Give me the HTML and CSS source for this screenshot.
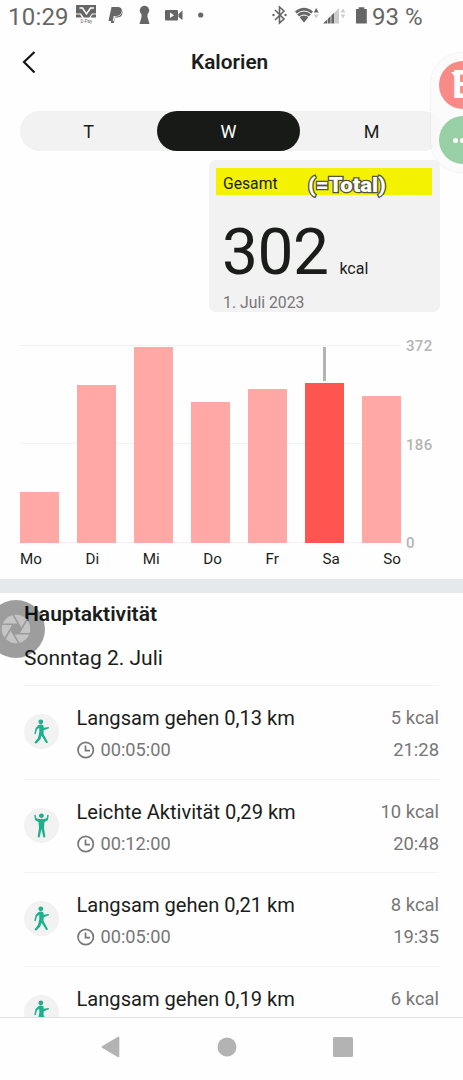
FILE: index.html
```html
<!DOCTYPE html>
<html lang="de">
<head>
  <meta charset="UTF-8">
  <title>Kalorien</title>
  <link rel="stylesheet" href="styles.css">
</head>
<body>
  <!-- icons used more than once -->
  <svg class="defs" width="0" height="0">
    <symbol id="walk" viewBox="0 0 35 35">
      <circle cx="16.8" cy="7.8" r="2.4"/>
      <path d="M14.500 11 Q17 9.800 19.300 11.200 L19.800 13.800 L24.700 12.900 L25 14.200 L19.700 16.200 L19.500 20 L24 28.200 L22.300 29.200 L17.600 21.800 L16.300 25.400 L12 29.700 L10.400 28.500 L14 24 L15.300 18 L15.200 13.800 L12.900 15.500 L11.700 20.300 L10.300 19.800 L11.600 14 Z"/>
    </symbol>
    <symbol id="stand" viewBox="0 0 35 35">
      <circle cx="17.4" cy="7.8" r="2.4"/>
      <path d="M10.300 7 L11.600 6.800 L12.300 10.300 L15.500 11 H19.400 L22.700 10.300 L23.300 6.800 L24.700 7 L24 12 L20.500 14 L20 20 L21.400 29 L19.400 29.400 L17.500 21 L15.600 29.400 L13.600 29 L15 20 L14.500 14 L11 12 Z"/>
    </symbol>
    <symbol id="clock" viewBox="0 0 18 18">
      <circle cx="8.700" cy="9" r="7.700"/>
      <path d="M8.500 4.500 V9.600 H13"/>
    </symbol>
  </svg>

  <div class="screen">
    <div class="status">
      <span class="time">10:29</span>
      <svg class="status-left" width="130" height="30" viewBox="76 0 130 30">
        <path d="M76 5h20v8.500h-4l-2.800 4h-5.400l-2.800-4h-5z"/>
        <path d="M76 14.500h4l2 3H76z M92.500 14.500H96v3h-5.500z"/>
        <path class="cut" d="M79.500 8h3l4 6 4-6H94"/>
        <text x="80.500" y="22.500">D-Pay</text>
        <path d="M111.500 7h7q4 .5 3.200 4.500-1 4.500-6 4.500h-2l-1 5h-4.200z"/>
        <path d="M122.500 10.500q.8 6.500-5.500 7h-2l-1.200 5.500h-3l.5-2h2.500l1.200-4.500h2q4.500-.5 5.500-6z"/>
        <circle cx="144.500" cy="10.500" r="4.700"/>
        <path d="M141.500 12h6v5l2 7h-10l2-7z"/>
        <rect x="165" y="10" width="13" height="10.500" rx="1"/>
        <path d="M178.500 14l4-3.500v9.500l-4-3z"/>
        <path class="white" d="M170 12.500l4 2.700-4 2.700z"/>
        <circle cx="200.700" cy="15" r="2.600"/>
      </svg>
      <svg class="status-right" width="96" height="30" viewBox="272 0 96 30">
        <path class="line" d="M275 10l9 9-4.500 4V7l4.500 4-9 9"/>
        <circle cx="273.500" cy="15" r="1.200"/>
        <circle cx="285.500" cy="15" r="1.200"/>
        <path d="M295 11.500q9-7.500 18 0L304 22.500z"/>
        <path class="wave" d="M296.500 14q7.500-6 15 0M299 17q5-4 10 0"/>
        <path d="M313.700 12.500l2.500-4.500 2.500 4.500z"/>
        <path class="pale" d="M313.700 14.500l2.500 4 2.500-4z"/>
        <path d="M323 23.500l4-3.800v3.800z M327.600 19l3-3v7.500h-3z M331.300 15.500l3-3v11h-3z"/>
        <path class="pale" d="M335 12l4-4v15.500h-4z M340.700 12.500l2.300-4 2.300 4z M340.700 14.500l2.300 4 2.300-4z"/>
        <path d="M356 9h2.700V7.200h5.600V9h2.500v14.500H356z"/>
      </svg>
      <span class="battery">93 %</span>
    </div>

    <div class="header">
      <svg class="back" width="16" height="24" viewBox="0 0 16 24"><path d="M13.500 2L3 12 13.500 22.500"/></svg>
      <h1>Kalorien</h1>
    </div>

    <div class="tabs">
      <div class="tab">T</div>
      <div class="tab active">W</div>
      <div class="tab">M</div>
    </div>

    <div class="card">
      <div class="mark">Gesamt <span class="note">(=Total)</span></div>
      <div class="value"><span class="amount">302</span><span class="unit">kcal</span></div>
      <div class="date">1. Juli 2023</div>
    </div>

    <div class="chart">
      <div class="plot">
        <div class="bar" style="height: 51px"></div>
        <div class="bar" style="height: 158px"></div>
        <div class="bar" style="height: 196px"></div>
        <div class="bar" style="height: 141px"></div>
        <div class="bar" style="height: 154.500px"></div>
        <div class="bar selected" style="height: 160px"></div>
        <div class="bar" style="height: 147.500px"></div>
      </div>
      <div class="scale"><span>372</span><span>186</span><span>0</span></div>
    </div>
    <div class="days">
      <span>Mo</span><span>Di</span><span>Mi</span><span>Do</span><span>Fr</span><span>Sa</span><span>So</span>
    </div>

    <div class="band"></div>

    <div class="activity">
      <h2>Hauptaktivität</h2>
      <h3>Sonntag 2. Juli</h3>
      <div class="row">
        <svg class="icon"><use href="#walk"/></svg>
        <div class="info">
          <div class="name">Langsam gehen 0,13 km</div>
          <div class="duration"><svg class="clock"><use href="#clock"/></svg>00:05:00</div>
        </div>
        <div class="numbers"><div>5 kcal</div><div>21:28</div></div>
      </div>
      <div class="row">
        <svg class="icon"><use href="#stand"/></svg>
        <div class="info">
          <div class="name">Leichte Aktivität 0,29 km</div>
          <div class="duration"><svg class="clock"><use href="#clock"/></svg>00:12:00</div>
        </div>
        <div class="numbers"><div>10 kcal</div><div>20:48</div></div>
      </div>
      <div class="row">
        <svg class="icon"><use href="#walk"/></svg>
        <div class="info">
          <div class="name">Langsam gehen 0,21 km</div>
          <div class="duration"><svg class="clock"><use href="#clock"/></svg>00:05:00</div>
        </div>
        <div class="numbers"><div>8 kcal</div><div>19:35</div></div>
      </div>
      <div class="row">
        <svg class="icon"><use href="#walk"/></svg>
        <div class="info">
          <div class="name">Langsam gehen 0,19 km</div>
        </div>
        <div class="numbers"><div>6 kcal</div></div>
      </div>
    </div>

    <div class="navbar">
      <svg width="20" height="22" viewBox="0 0 20 22"><path d="M2 10.300L18 .8q1.300-.3 1.300.7v19q0 1-1.300.7L2 11.700q-1-.7 0-1.400z"/></svg>
      <svg width="20" height="20" viewBox="0 0 20 20"><circle cx="10" cy="10" r="9.500"/></svg>
      <svg width="20" height="20" viewBox="0 0 20 20"><rect width="20" height="20" rx="1.500"/></svg>
    </div>

    <!-- floating buttons -->
    <div class="bubble">
      <div class="dot red">B</div>
      <div class="dot green"><i></i><i></i><i></i></div>
    </div>
    <svg class="shutter" width="58" height="58" viewBox="0 0 58 58">
      <circle class="shade" cx="29" cy="29" r="29"/>
      <circle class="lens" cx="29" cy="29" r="14.300"/>
      <path class="hole" d="M26.300 24.300h5.400l2.700 4.700-2.700 4.700h-5.400L23.600 29z"/>
      <path class="blades" d="M31.700 24.300H14.700M34.400 29L25.900 14.300M31.700 33.700L40.200 19M26.300 33.700H43.300M23.600 29L32.100 43.700M26.300 24.300L17.800 39"/>
    </svg>
  </div>
</body>
</html>
```
FILE: styles.css
```css
* {
  box-sizing: border-box;
}

body {
  margin: 0;
  background: #fefefe;
  font-family: Roboto, sans-serif;
  color: #1b1d1b;
}

h1, h2, h3 {
  margin: 0;
}

.defs {
  display: block;
}

.screen {
  position: relative;
  width: 463px;
  height: 1080px;
  overflow: hidden;
  display: flex;
  flex-direction: column;
}

/* status bar */
.status {
  height: 32px;
  display: flex;
  flex: none;
  padding-left: 8px;
  color: #666;
  font-size: 24px;
  line-height: 34px;
}

.status svg {
  fill: #666;
  flex: none;
}

.time {
  width: 68px;
  letter-spacing: 0.2px;
}

.status-right {
  margin-left: 66px;
}

.status text {
  font-size: 4.5px;
}

.status .cut {
  fill: none;
  stroke: #fefefe;
  stroke-width: 1.5;
}

.status .white {
  fill: #fefefe;
}

.status .line {
  fill: none;
  stroke: #666;
  stroke-width: 1.6;
}

.status .wave {
  fill: none;
  stroke: #fefefe;
  stroke-width: 1;
}

.status .pale {
  fill: #ccc;
}

.battery {
  margin-left: 4px;
  white-space: nowrap;
}

/* title */
.header {
  height: 79px;
  flex: none;
  display: flex;
  padding: 18px 0 0 21px;
}

.back {
  fill: none;
  stroke: #161616;
  stroke-width: 2.2;
}

h1 {
  margin-left: 154px;
  font-size: 20.8px;
  font-weight: 600;
  line-height: 25px;
}

.tabs {
  display: flex;
  flex: none;
  height: 40px;
  margin: 0 20px;
  border-radius: 20px;
  background: #f2f2f2;
}

.tab {
  width: 137px;
  font-size: 18px;
  line-height: 41px;
  text-align: center;
}

.tab.active {
  width: 143px;
  border-radius: 20px;
  background: #181a17;
  color: #fff;
}

.tab:last-child {
  width: 143px;
}

/* total */
.card {
  flex: none;
  width: 231px;
  height: 152px;
  margin: 9px 0 0 209px;
  padding: 8px 8px 0 7px;
  border-radius: 7px;
  background: #f2f2f2;
}

.mark {
  display: flex;
  height: 27px;
  padding-left: 7px;
  background: #f4f200;
  font-size: 15.7px;
  line-height: 32px;
}

.note {
  margin-left: 30px;
  height: 34px;
  font-size: 20px;
  font-weight: 900;
  line-height: 35px;
  color: #fff;
  -webkit-text-stroke: 2.5px #55553a;
  paint-order: stroke fill;
  transform: scaleX(1.1);
  transform-origin: left;
}

.value {
  display: flex;
  align-items: baseline;
  height: 88px;
  padding: 20px 0 0 6px;
}

.amount {
  font-size: 64px;
  line-height: 75px;
  letter-spacing: -0.5px;
}

.unit {
  margin-left: 11px;
  font-size: 16px;
  line-height: 20px;
}

.date {
  padding-left: 7px;
  font-size: 15.8px;
  line-height: 39px;
  height: 24px;
  color: #777;
}

/* chart */
.chart {
  display: flex;
  flex: none;
  margin: 33px 0 0 20px;
}

.plot {
  width: 381px;
  height: 198px;
  display: flex;
  justify-content: space-between;
  align-items: flex-end;
  background: linear-gradient(#f1f1f1, #f1f1f1) 0 0 / 100% 1px no-repeat,
    linear-gradient(#f1f1f1, #f1f1f1) 0 98px / 100% 1px no-repeat,
    linear-gradient(#f1f1f1, #f1f1f1) 0 100% / 100% 1px no-repeat;
}

.bar {
  width: 38.5px;
  background: #ffa8a5;
}

.bar.selected {
  position: relative;
  background: #ff5550;
}

/* marker above the selected day */
.bar.selected::before {
  content: "";
  position: absolute;
  left: 18px;
  top: -36px;
  width: 3px;
  height: 34px;
  background: #b3b3b3;
}

.scale {
  display: flex;
  flex-direction: column;
  justify-content: space-between;
  height: 216px;
  margin: -8px 0 -10px 5px;
  font-size: 15px;
  font-weight: 500;
  line-height: 19px;
  letter-spacing: 0.3px;
  color: #b5b5b5;
}

.days {
  display: flex;
  justify-content: space-between;
  flex: none;
  width: 381px;
  height: 36px;
  margin-left: 20px;
  font-size: 15.2px;
  line-height: 32px;
}

.band {
  flex: none;
  height: 14px;
  background: #e5e9ec;
}

/* activities */
.activity {
  height: 424px;
  overflow: hidden;
  flex: none;
  padding: 0 24px;
}

h2 {
  font-size: 21px;
  font-weight: 600;
  line-height: 42px;
}

h3 {
  height: 50px;
  font-size: 21px;
  font-weight: 400;
  line-height: 46px;
}

.row {
  display: flex;
  height: 93.5px;
  border-top: 1px solid #f3f3f3;
  padding-top: 16px;
}

.icon {
  width: 35px;
  height: 35px;
  margin-top: 12px;
  border-radius: 50%;
  background: #f2f2f2;
  fill: #1cb08d;
}

.info {
  margin-left: 17.5px;
  flex: 1;
  line-height: 32px;
}

.name {
  font-size: 20.1px;
}

.duration {
  display: flex;
  align-items: center;
  font-size: 18.2px;
  color: #777;
}

.clock {
  width: 18px;
  height: 18px;
  margin-right: 6px;
  fill: none;
  stroke: #777;
  stroke-width: 1.7;
}

.numbers {
  font-size: 18.4px;
  line-height: 32px;
  text-align: right;
  color: #777;
}

/* system navigation */
.navbar {
  flex: none;
  height: 63px;
  border-top: 1px solid #e1e1e1;
  display: flex;
  justify-content: space-between;
  align-items: center;
  padding: 0 110px 4px 100px;
  fill: #b3b3b3;
}

/* overlays */
.bubble {
  position: absolute;
  top: 53px;
  left: 431px;
  width: 64px;
  height: 119px;
  padding: 8px;
  border-radius: 30px;
  background: rgba(250, 250, 250, 0.75);
  box-shadow: 0 0 2px rgba(0, 0, 0, 0.12);
}

.dot {
  width: 48px;
  height: 48px;
  margin-bottom: 7px;
  border-radius: 50%;
  display: flex;
  color: #fff;
}

.red {
  position: relative;
  background: #f98b87;
  padding-left: 13px;
  font-size: 38px;
  font-weight: 700;
  line-height: 49px;
}

/* serif on the letter's top left corner */
.red::before {
  content: "";
  position: absolute;
  left: 12px;
  top: 11px;
  width: 8px;
  height: 4px;
  background: #fff;
  clip-path: polygon(0 0, 100% 0, 100% 100%, 40% 100%);
}

.green {
  align-items: center;
  gap: 2px;
  padding-left: 14px;
  background: #99cfa5;
}

.green i {
  width: 5px;
  height: 5px;
  border-radius: 50%;
  background: #fff;
}

.shutter {
  position: absolute;
  left: -13px;
  top: 600px;
}

.shade {
  fill: #000;
  opacity: 0.38;
}

.lens {
  fill: #c4c4c4;
}

.blades {
  stroke: #9b9b9b;
  stroke-width: 1.6;
}

.hole {
  fill: #9b9b9b;
}
```
